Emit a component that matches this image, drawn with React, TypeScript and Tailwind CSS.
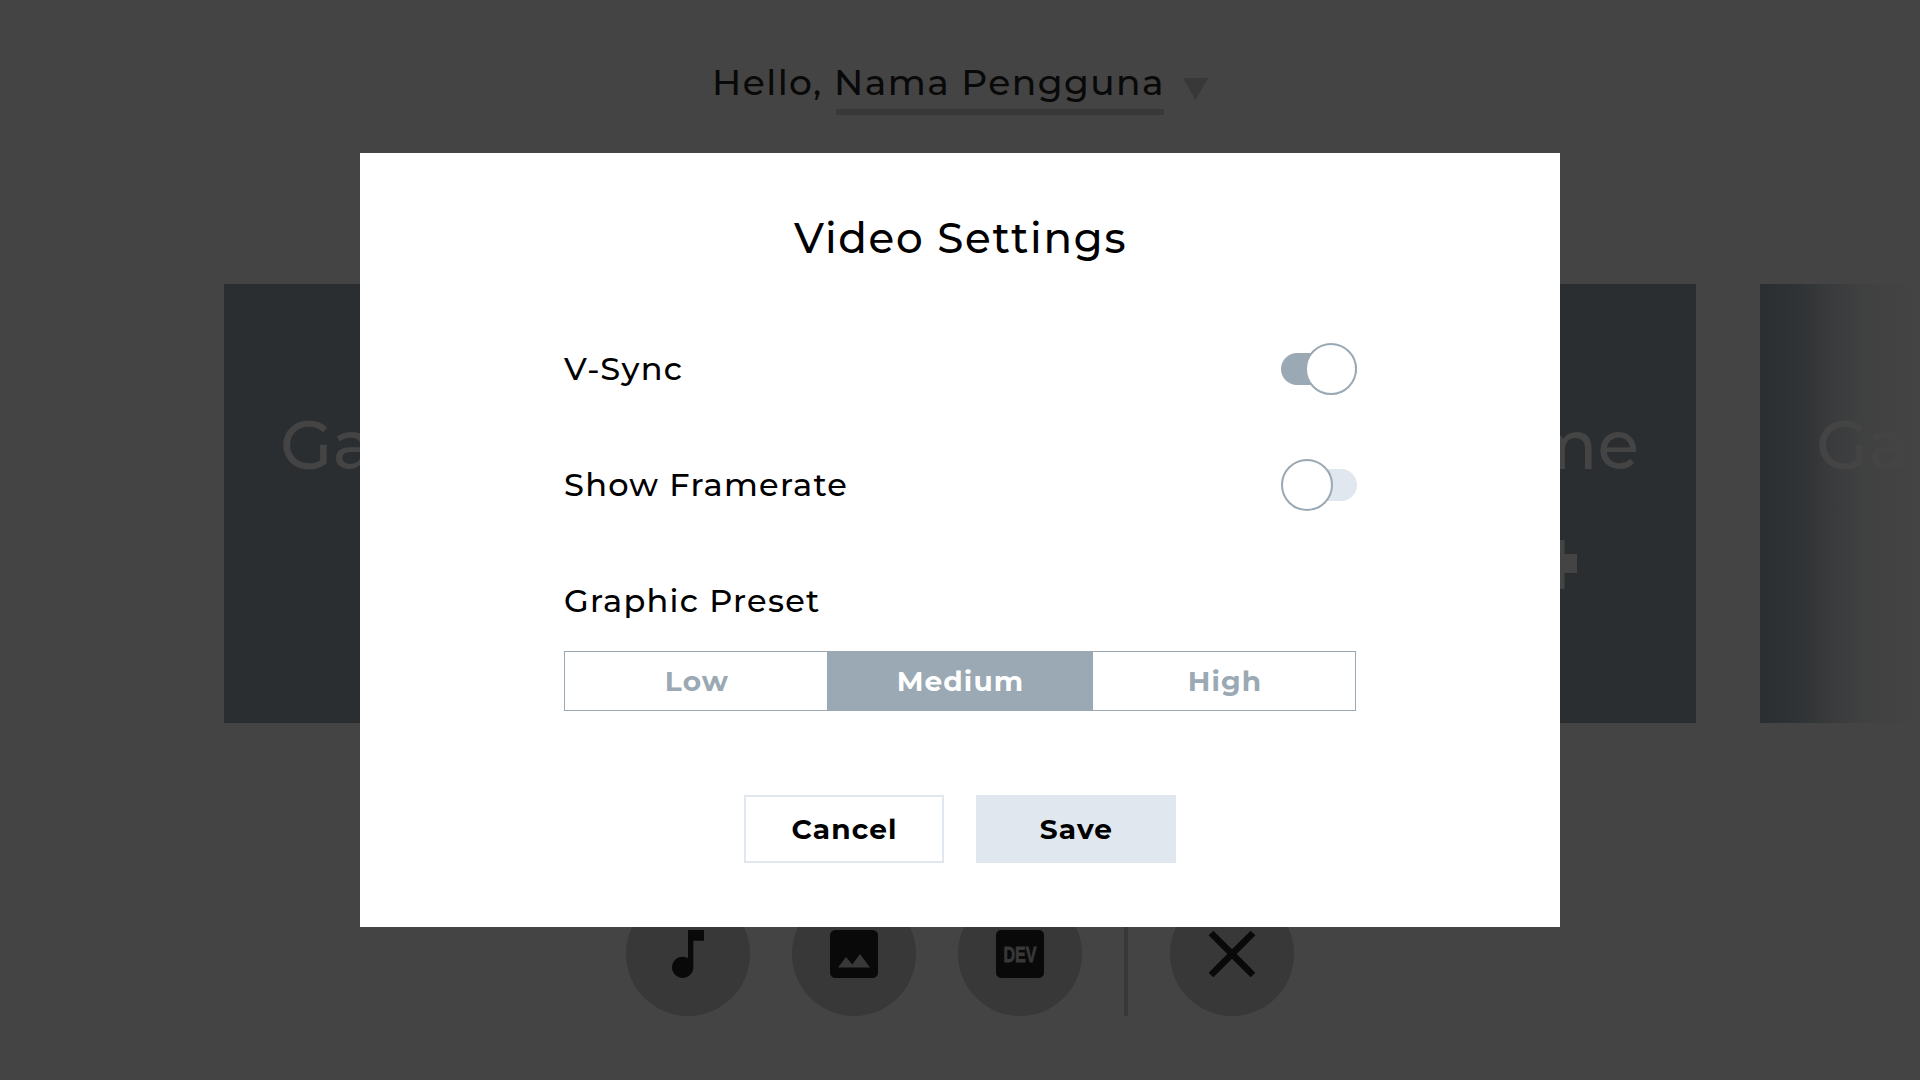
import { useState, type ReactNode } from "react";
import { MdClose, MdMusicNote } from "react-icons/md";

function RoundButton({ label, children }: { label: string; children: ReactNode }) {
  return (
    <button
      aria-label={label}
      className="flex size-[124px] shrink-0 items-center justify-center rounded-full bg-[#383838] text-[#090909]"
    >
      {children}
    </button>
  );
}

function GameCard({ align = "left", children }: { align?: "left" | "right"; children?: ReactNode }) {
  return (
    <div className="h-[439px] w-[448px] shrink-0 bg-[#2a2e31] px-14 pt-[121px]">
      <div
        className={
          align === "left"
            ? "text-left text-[68px] font-medium leading-[80px] text-[#444444]"
            : "pr-px text-right text-[68px] font-medium leading-[80px] text-[#444444]"
        }
      >
        Game
      </div>
      {children}
    </div>
  );
}

function ImageIcon() {
  return (
    <svg viewBox="0 0 24 24" className="size-16" fill="currentColor" fillRule="evenodd">
      <path d="M5 3h14a2 2 0 0 1 2 2v14a2 2 0 0 1-2 2H5a2 2 0 0 1-2-2V5a2 2 0 0 1 2-2zM6 17.1h12L14.25 12l-2.9 3.9L9 13.1z" />
    </svg>
  );
}

function DevIcon() {
  return (
    <svg viewBox="0 0 48 48" className="size-12">
      <rect width="48" height="48" rx="5" fill="currentColor" />
      <text
        x="7.500"
        y="31.5"
        textLength="33"
        lengthAdjust="spacingAndGlyphs"
        fill="#383838"
        stroke="#383838"
        strokeWidth="0.8"
        className="font-['Liberation_Sans',sans-serif] text-[22px] font-bold"
      >
        DEV
      </text>
    </svg>
  );
}

function Toggle({ on, onChange, label }: { on: boolean; onChange: () => void; label: string }) {
  return (
    <button
      role="switch"
      aria-checked={on}
      aria-label={label}
      onClick={onChange}
      className="-mr-px flex h-[52px] w-[76px] items-center"
    >
      <span
        className={
          on
            ? "flex h-8 w-full items-center justify-end rounded-full bg-[#9aa9b3]"
            : "flex h-8 w-full items-center justify-start rounded-full bg-[#e0e7ee]"
        }
      >
        <span className="size-[52px] shrink-0 rounded-full border-2 border-[#9aa9b3] bg-white" />
      </span>
    </button>
  );
}

const presets = ["Low", "Medium", "High"];

export default function App() {
  const [vsync, setVsync] = useState(true);
  const [framerate, setFramerate] = useState(false);
  const [preset, setPreset] = useState("Medium");

  return (
    <div className="relative h-[1080px] w-[1920px] overflow-hidden bg-[#444444] font-['Montserrat','Inter',sans-serif] text-black">
      <div className="flex h-full flex-col">
        <header className="flex h-[284px] shrink-0 items-start pl-[712px] pt-[50px] text-[36px] font-medium leading-[65px] tracking-[0.04em] text-[#090909]">
          <span className="w-[124px] shrink-0 whitespace-nowrap">Hello,</span>
          <span className="h-[65px] w-[328px] shrink-0 whitespace-nowrap border-b-[6px] border-[#383838]">
            <span className="-ml-0.5">Nama Pengguna</span>
          </span>
          <svg viewBox="0 0 25 22" className="ml-[19px] mt-7 h-[22px] w-[25px] shrink-0">
            <path d="M0 0h25L12.5 22z" fill="#383838" />
          </svg>
        </header>

        <div className="flex h-[439px] shrink-0 gap-16 pl-56">
          <GameCard />
          <GameCard />
          <GameCard align="right">
            <svg viewBox="0 0 50 49" className="ml-[223px] mt-[55px] h-[49px] w-[50px]" fill="#444444">
              <path d="M17 0h20.5v14H50v19H37.500v16H17V33H0V14h17z" />
            </svg>
          </GameCard>
          <div className="relative h-[439px] shrink-0">
            <GameCard />
            <div className="absolute inset-y-0 left-0 w-[160px] bg-[linear-gradient(to_right,#44444400_0%,#4444443c_25%,#44444494_45%,#444444d8_65%,#444444_100%)]" />
          </div>
        </div>

        <footer className="mt-[169px] flex h-[124px] shrink-0 items-center justify-center gap-[42px]">
          <RoundButton label="Music">
            <MdMusicNote className="size-16" />
          </RoundButton>
          <RoundButton label="Gallery">
            <ImageIcon />
          </RoundButton>
          <RoundButton label="Developer">
            <DevIcon />
          </RoundButton>
          <div className="h-full w-1 bg-[#383838]" />
          <RoundButton label="Close">
            <MdClose className="size-20" />
          </RoundButton>
        </footer>
      </div>

      <div className="absolute inset-0 flex justify-center pt-[153px]">
        <section
          role="dialog"
          aria-label="Video Settings"
          className="flex h-[774px] w-[1200px] flex-col items-center bg-white"
        >
          <h1 className="mt-[55px] pl-px text-[42px] font-medium leading-[60px] tracking-[0.04em]">Video Settings</h1>

          <div className="mt-[75px] flex w-[792px] flex-col text-[32px] font-medium tracking-[0.04em]">
            <div className="flex h-[52px] items-center justify-between">
              <span>V-Sync</span>
              <Toggle label="V-Sync" on={vsync} onChange={() => setVsync(!vsync)} />
            </div>
            <div className="mt-16 flex h-[52px] items-center justify-between">
              <span>Show Framerate</span>
              <Toggle label="Show Framerate" on={framerate} onChange={() => setFramerate(!framerate)} />
            </div>
            <div className="mt-16 flex h-[52px] items-center">
              <span>Graphic Preset</span>
            </div>
          </div>

          <div className="mt-6 flex h-[60px] w-[792px] border border-[#9aa9b3] text-[28px] font-bold tracking-[0.04em]">
            {presets.map((name) => (
              <button
                key={name}
                onClick={() => setPreset(name)}
                className={
                  name === preset
                    ? "-my-px w-[266px] bg-[#9aa9b3] pl-px text-white"
                    : "w-[262px] pl-0.5 text-[#9aa9b3]"
                }
              >
                {name}
              </button>
            ))}
          </div>

          <div className="mt-[84px] flex gap-8 text-[28px] font-bold tracking-[0.04em]">
            <button className="h-[68px] w-[200px] border-2 border-[#e0e7ee] pl-px">Cancel</button>
            <button className="h-[68px] w-[200px] bg-[#e0e7ee] pl-px">Save</button>
          </div>
        </section>
      </div>
    </div>
  );
}
